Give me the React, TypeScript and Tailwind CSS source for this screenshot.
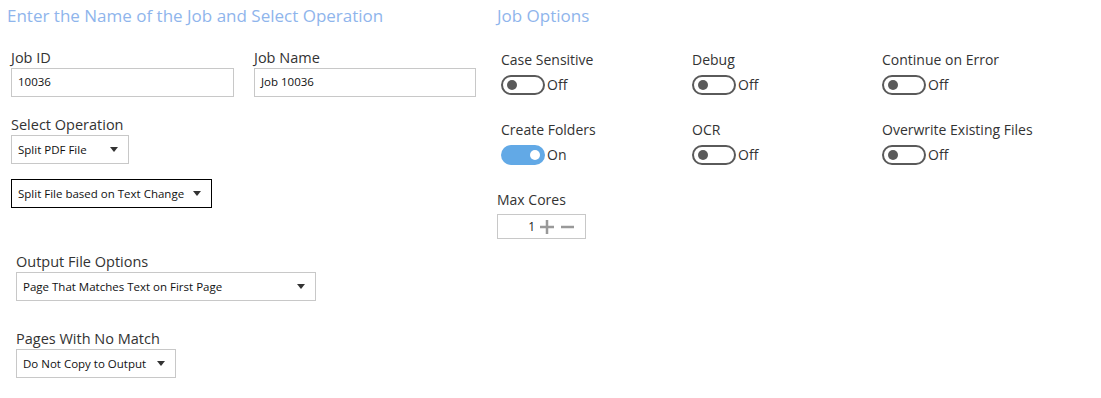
import React from "react"

const font = { fontFamily: '"Open Sans", "Noto Sans", sans-serif' }

function Caret() {
  return (
    <svg width="8" height="5" viewBox="0 0 8 5" className="shrink-0">
      <path d="M0 0 L8 0 L4 5 Z" fill="#333" />
    </svg>
  )
}

function Select({ value, width, dark }: { value: string; width: string; dark?: boolean }) {
  return (
    <div
      className={`flex h-[29px] items-center justify-between pl-[6px] pr-[10px] text-[11.5px] text-[#111] ${width} ${
        dark ? "border border-black" : "border border-[#c8c8c8]"
      }`}
    >
      <span>{value}</span>
      <Caret />
    </div>
  )
}

function Toggle({ label, on }: { label: string; on?: boolean }) {
  return (
    <div className="flex flex-col">
      <div className="h-[20px] text-[14px] leading-[20px] text-[#333]">{label}</div>
      <div className="mt-[4px] flex items-center">
        {on ? (
          <div className="flex h-[20px] w-[44px] items-center justify-end rounded-full bg-[#62a9e6] pr-[5px]">
            <div className="h-[10px] w-[10px] rounded-full bg-white" />
          </div>
        ) : (
          <div className="flex h-[20px] w-[44px] items-center rounded-full border-2 border-[#5a5a5a] pl-[4px]">
            <div className="h-[10px] w-[10px] rounded-full bg-[#5a5a5a]" />
          </div>
        )}
        <span className="ml-[2px] text-[14px] text-[#333]">{on ? "On" : "Off"}</span>
      </div>
    </div>
  )
}

export default function App() {
  return (
    <div className="flex h-[398px] w-[1101px] bg-white" style={font}>
      {/* left side */}
      <div className="flex w-[490px] flex-col">
        <div className="ml-[7px] mt-[4px] h-[24px] text-[17px] leading-[24px] text-[#8fb5ec]">
          Enter the Name of the Job and Select Operation
        </div>

        <div className="ml-[11px] mt-[20px] flex gap-[20px]">
          <div className="flex flex-col">
            <div className="h-[20px] text-[14.5px] leading-[20px] text-[#333]">Job ID</div>
            <div className="flex h-[29px] w-[223px] items-center border border-[#c8c8c8] px-[6px] pb-[2px] text-[11.5px] text-[#111]">
              10036
            </div>
          </div>
          <div className="flex flex-col">
            <div className="h-[20px] text-[14.5px] leading-[20px] text-[#333]">Job Name</div>
            <div className="flex h-[29px] w-[222px] items-center border border-[#c8c8c8] px-[6px] pb-[2px] text-[11.5px] text-[#111]">
              Job 10036
            </div>
          </div>
        </div>

        <div className="ml-[11px] mt-[18px] h-[20px] text-[14.5px] leading-[20px] text-[#333]">Select Operation</div>
        <Select value="Split PDF File" width="w-[118px] ml-[11px]" />
        <div className="mt-[15px]">
          <Select value="Split File based on Text Change" width="w-[201px] ml-[11px]" dark />
        </div>

        <div className="ml-[16px] mt-[44px] h-[20px] text-[14.5px] leading-[20px] text-[#333]">Output File Options</div>
        <Select value="Page That Matches Text on First Page" width="w-[300px] ml-[16px]" />

        <div className="ml-[16px] mt-[28px] h-[20px] text-[14.5px] leading-[20px] text-[#333]">Pages With No Match</div>
        <Select value="Do Not Copy to Output" width="w-[160px] ml-[16px]" />
      </div>

      {/* right side */}
      <div className="ml-[7px] flex flex-col">
        <div className="mt-[4px] h-[24px] text-[17px] leading-[24px] text-[#8fb5ec]">Job Options</div>

        <div className="ml-[4px] mt-[22px] grid grid-cols-[191px_190px_200px] gap-y-[25px]">
          <Toggle label="Case Sensitive" />
          <Toggle label="Debug" />
          <Toggle label="Continue on Error" />
          <Toggle label="Create Folders" on />
          <Toggle label="OCR" />
          <Toggle label="Overwrite Existing Files" />
        </div>

        <div className="mt-[25px] h-[20px] text-[14px] leading-[20px] text-[#333]">Max Cores</div>
        <div className="mt-[4px] flex h-[25px] w-[89px] items-center justify-end border border-[#c8c8c8] pr-[11px] text-[12px] text-[#222]">
          <span className="mr-[5px]">1</span>
          <svg width="14" height="14" viewBox="0 0 14 14">
            <path d="M7 0 V14 M0 7 H14" stroke="#999" strokeWidth="2.5" />
          </svg>
          <svg width="13" height="14" viewBox="0 0 13 14" className="ml-[7px]">
            <path d="M0 7 H13" stroke="#999" strokeWidth="2.5" />
          </svg>
        </div>
      </div>
    </div>
  )
}
